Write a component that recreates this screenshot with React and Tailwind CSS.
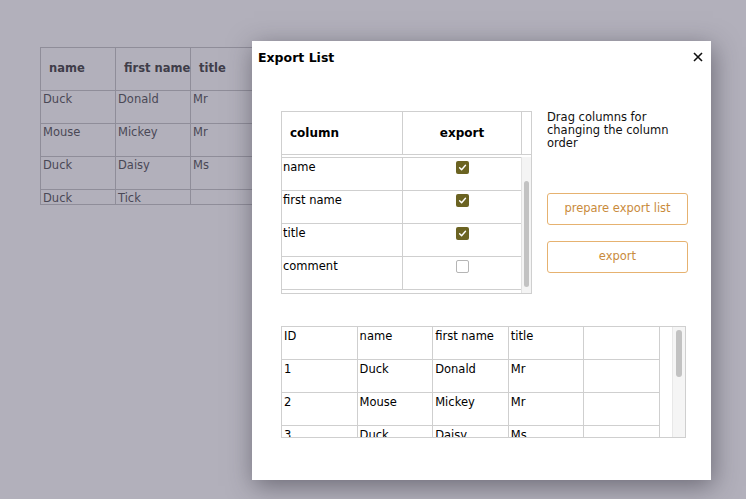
import React from "react";

const Check = ({ checked }) =>
  checked ? (
    <span className="inline-flex w-[13px] h-[13px] rounded-[2px] bg-[#6b6322] items-center justify-center">
      <svg width="9" height="9" viewBox="0 0 10 10">
        <path d="M1.8 5.2 L4 7.4 L8.3 2.6" fill="none" stroke="#fff" strokeWidth="1.6" strokeLinecap="round" strokeLinejoin="round" />
      </svg>
    </span>
  ) : (
    <span className="inline-block w-[13px] h-[13px] rounded-[2px] border border-[#b5b5b5] bg-white" />
  );

export default function App() {
  const bgRows = [
    ["Duck", "Donald", "Mr"],
    ["Mouse", "Mickey", "Mr"],
    ["Duck", "Daisy", "Ms"],
    ["Duck", "Tick", ""],
  ];
  const cols = [
    ["name", true],
    ["first name", true],
    ["title", true],
    ["comment", false],
  ];
  const preview = [
    ["ID", "name", "first name", "title", ""],
    ["1", "Duck", "Donald", "Mr", ""],
    ["2", "Mouse", "Mickey", "Mr", ""],
    ["3", "Duck", "Daisy", "Ms", ""],
  ];
  return (
    <div className="relative w-[746px] h-[499px] bg-[#b2b0bb] overflow-hidden font-['DejaVu_Sans',Verdana,sans-serif] text-[11.5px]">
      {/* background page table */}
      <div className="pt-[47px] pl-[40px]">
        <div className="h-[158px] w-[300px] overflow-hidden border-b border-[#8f8d99]">
          <div className="flex h-[44px] border-t border-l border-[#8f8d99] text-[#3f3d49] font-bold text-[11.5px] whitespace-nowrap">
            {["name", "first name", "title", ""].map((h, i) => (
              <div key={i} className="w-[75px] shrink-0 border-r border-b border-[#8f8d99] pl-[8px] flex items-center">
                {h}
              </div>
            ))}
          </div>
          {bgRows.map((r, i) => (
            <div key={i} className="flex h-[33px] border-l border-[#8f8d99] text-[#4a4856]">
              {[...r, ""].map((c, j) => (
                <div key={j} className="w-[75px] shrink-0 border-r border-b border-[#8f8d99] pl-[2px] pt-[1px] leading-[15px]">
                  {c}
                </div>
              ))}
            </div>
          ))}
        </div>
      </div>

      {/* modal */}
      <div className="absolute left-[252px] top-[41px] w-[459px] h-[439px] bg-white shadow-[2px_6px_24px_rgba(40,38,50,0.5)] text-black">
        <div className="flex justify-between items-start pl-[6px] pr-[6px] pt-[9px]">
          <div className="font-bold text-[12.5px] leading-[16px]">Export List</div>
          <svg width="12" height="12" viewBox="0 0 12 12" className="mt-[1px] mr-[1px]">
            <path d="M2 2 L10 10 M10 2 L2 10" stroke="#111" strokeWidth="1.6" />
          </svg>
        </div>

        <div className="flex pl-[29px] mt-[45px]">
          {/* column table */}
          <div className="w-[251px] h-[183px] border border-[#cfcfcf] flex flex-col">
            <div className="flex h-[43px] border-b border-[#cfcfcf] font-bold text-[12px]">
              <div className="w-[121px] border-r border-[#cfcfcf] pl-[8px] flex items-center">column</div>
              <div className="w-[119px] border-r border-[#cfcfcf] flex items-center justify-center">export</div>
              <div className="flex-1" />
            </div>
            <div className="flex mt-[2px] flex-1">
              <div className="w-[239px] border-t border-[#cfcfcf]">
                {cols.map(([n, c], i) => (
                  <div key={i} className="flex h-[33px] border-b border-[#cfcfcf]">
                    <div className="w-[121px] border-r border-[#cfcfcf] pl-[1px] pt-[2px] leading-[15px]">{n}</div>
                    <div className="flex-1 flex justify-center pt-[3px]">
                      <Check checked={c} />
                    </div>
                  </div>
                ))}
              </div>
              <div className="flex-1 bg-[#f4f4f4] border-l border-[#e2e2e2] relative">
                <div className="absolute left-[2px] right-[2px] top-[24px] h-[106px] rounded-full bg-[#c2c2c2]" />
              </div>
            </div>
          </div>

          {/* right panel */}
          <div className="ml-[15px] w-[141px] flex flex-col">
            <div className="leading-[13px] mt-[0px] text-[#111]">
              Drag columns for changing the column order
            </div>
            <div className="mt-[43px] h-[32px] rounded-[3px] border border-[#e6b270] text-[#c98b3c] flex items-center justify-center">
              prepare export list
            </div>
            <div className="mt-[16px] h-[32px] rounded-[3px] border border-[#e6b270] text-[#c98b3c] flex items-center justify-center">
              export
            </div>
          </div>
        </div>

        {/* preview table */}
        <div className="ml-[29px] mt-[32px] w-[405px] h-[112px] border border-[#cfcfcf] flex overflow-hidden">
          <div className="w-[378px] shrink-0">
            {preview.map((r, i) => (
              <div key={i} className="flex h-[33px] border-b border-[#cfcfcf]">
                {r.map((c, j) => (
                  <div key={j} className="w-[75.6px] shrink-0 border-r border-[#cfcfcf] pl-[2px] pt-[2px] leading-[15px]">
                    {c}
                  </div>
                ))}
              </div>
            ))}
          </div>
          <div className="flex-1 flex justify-end">
            <div className="w-[13px] h-full bg-[#f5f5f5] border-l border-[#e8e8e8] relative">
              <div className="absolute left-[3px] right-[3px] top-[3px] h-[47px] rounded-full bg-[#c2c2c2]" />
            </div>
          </div>
        </div>
      </div>
    </div>
  );
}
